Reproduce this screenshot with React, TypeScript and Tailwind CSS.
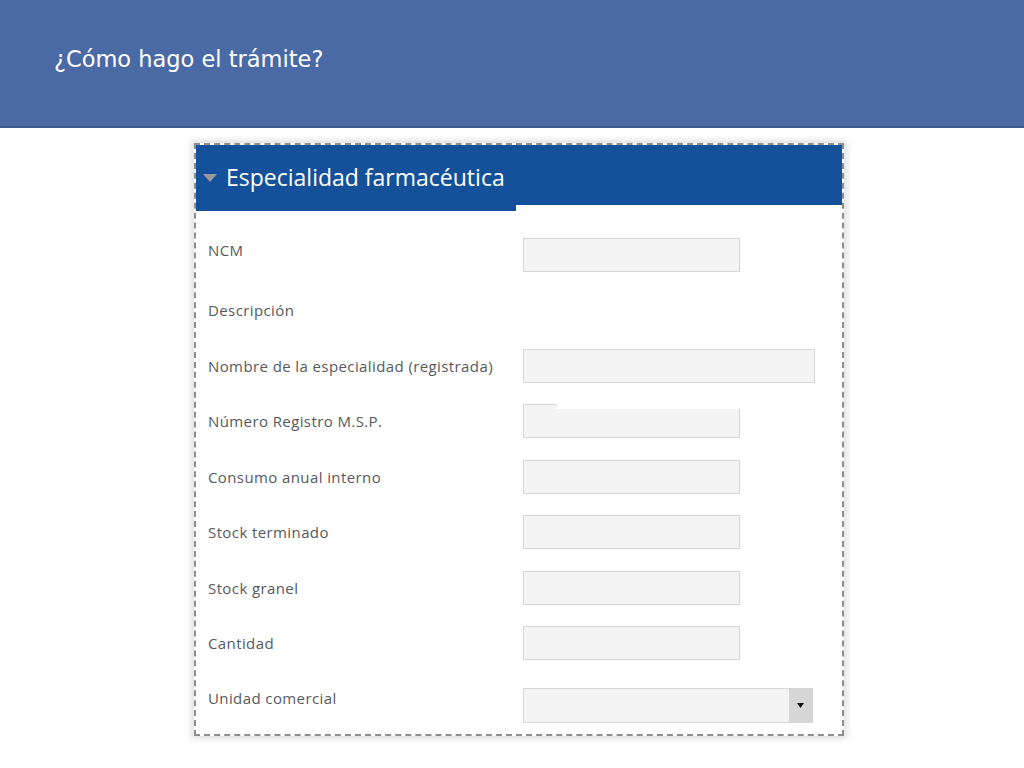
import { Fragment } from "react";

const rows = [
  { label: "NCM", field: "short", lift: true },
  { label: "Descripción", field: "none" },
  { label: "Nombre de la especialidad (registrada)", field: "long" },
  { label: "Número Registro M.S.P.", field: "glitch" },
  { label: "Consumo anual interno", field: "short" },
  { label: "Stock terminado", field: "short" },
  { label: "Stock granel", field: "short" },
  { label: "Cantidad", field: "short" },
];

function Field({ kind }: { kind: string }) {
  if (kind === "none") return null;
  if (kind === "long") {
    return <div className="h-[34px] w-[292px] border border-[#d6d6d6] bg-[#f4f4f4]" />;
  }
  if (kind === "glitch") {
    return (
      <div className="relative h-[34px] w-[217px]">
        <div className="absolute left-0 top-0 h-[34px] w-[34px] border-l border-t border-[#d6d6d6] bg-[#f4f4f4]" />
        <div className="absolute bottom-0 left-0 right-0 h-[29px] border-b border-l border-r border-[#d6d6d6] bg-[#f4f4f4]" />
      </div>
    );
  }
  return <div className="h-[34px] w-[217px] border border-[#d6d6d6] bg-[#f4f4f4]" />;
}

export default function App() {
  return (
    <div className="min-h-[768px] w-[1024px] bg-white" style={{ fontFamily: '"Open Sans", sans-serif' }}>
      {/* Slide title */}
      <div className="flex h-[128px] items-start border-b-2 border-[#3d5a8c] bg-[#4a6aa5] pl-[54px] pt-[43px]">
        <h1 className="text-[22.5px] text-white" style={{ fontFamily: '"DejaVu Sans", sans-serif' }}>
          ¿Cómo hago el trámite?
        </h1>
      </div>

      {/* Form screenshot */}
      <div className="mt-[15px] ml-[194px] h-[593px] w-[650px] border-2 border-dashed border-[#8e8e8e] bg-white shadow-[0_0_6px_3px_rgba(0,0,0,0.12)]">
        <div className="relative h-[60px] bg-[#15519a]">
          <div className="flex h-full items-center gap-2 pl-[6px] pt-[5px]">
            <svg width="16" height="10" viewBox="0 0 16 10">
              <path d="M1 1 L15 1 L8 9 Z" fill="#9a9a9a" />
            </svg>
            <span className="text-[23px] leading-none text-white">Especialidad farmacéutica</span>
          </div>
          <div className="absolute left-0 top-full h-[6px] w-[320px] bg-[#15519a]" />
        </div>

        <div className="pl-[12px] pt-[22px]">
          {rows.map((r) => (
            <Fragment key={r.label}>
              <div className="flex h-[55.5px] items-center">
                <span
                  className={`w-[315px] text-[15px] tracking-[0.4px] text-[#555a60] ${r.lift ? "-mt-[10px]" : ""}`}
                >
                  {r.label}
                </span>
                <Field kind={r.field} />
              </div>
            </Fragment>
          ))}
          <div className="mt-[12px] flex h-[40px] items-start">
            <span className="w-[315px] pt-[4px] text-[15px] tracking-[0.4px] text-[#555a60]">Unidad comercial</span>
            <div className="mt-[5px] flex h-[35px] w-[290px] border border-[#d6d6d6] bg-[#f4f4f4]">
              <div className="flex-1" />
              <div className="flex w-[23px] items-center justify-center bg-[#d6d6d6]">
                <svg width="7" height="5" viewBox="0 0 7 5">
                  <path d="M0 0 L7 0 L3.5 5 Z" fill="#111" />
                </svg>
              </div>
            </div>
          </div>
        </div>
      </div>
    </div>
  );
}
